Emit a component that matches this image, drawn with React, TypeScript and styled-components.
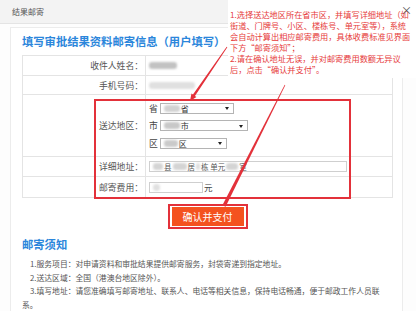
import React from "react";
import styled, { createGlobalStyle } from "styled-components";

const GlobalStyle = createGlobalStyle`
  html, body { margin: 0; padding: 0; background: #ffffff; }
  body { font-family: "Noto Sans CJK SC", "Noto Sans", sans-serif; color: #555; }
  * { box-sizing: border-box; }
`;

const Page = styled.div`
  position: relative;
  width: 416px;
  height: 311px;
  overflow: hidden;
  background: #fdfdfd;
`;

const Header = styled.div`
  height: 24px;
  border-bottom: 1px solid #e4e4e4;
  background: #f3f3f3;
  display: flex;
  align-items: center;
  padding: 0 0 0 12px;
  font-size: 8px;
  color: #555;
`;

const Close = styled.span`
  position: absolute;
  top: 4px;
  right: 4px;
  z-index: 4;
  font-size: 11px;
  line-height: 12px;
  color: #555;
`;

const Panel = styled.div`
  margin: 3px 13px 0 10px;
  min-height: 290px;
  background: #fff;
  border: 1px solid #ececec;
  border-bottom: none;
  padding: 5px 9px 0 11px;
`;

const Title = styled.h2`
  margin: 0 0 5px;
  font-size: 11.3px;
  line-height: 17px;
  font-weight: bold;
  color: #2b86db;
  white-space: nowrap;
`;

const Table = styled.div`
  border: 1px solid #e4e4e4;
  border-bottom: none;
`;

const Row = styled.div<{ $h: number }>`
  display: flex;
  height: ${(p) => p.$h}px;
  border-bottom: 1px solid #e4e4e4;
`;

const Label = styled.div`
  flex: none;
  width: 123px;
  border-right: 1px solid #e4e4e4;
  display: flex;
  align-items: center;
  justify-content: flex-end;
  padding-right: 2px;
  font-size: 8.8px;
  color: #555;
  white-space: nowrap;
`;

const Cell = styled.div`
  flex: 1;
  display: flex;
  align-items: center;
  padding-left: 3px;
  font-size: 8.5px;
  color: #444;
`;

const RegionList = styled.div`
  display: flex;
  flex-direction: column;
`;

const RegionLine = styled.div`
  display: flex;
  align-items: center;
  height: 17.5px;
  gap: 2px;
  font-size: 8.8px;
  color: #444;
`;

const SelectBox = styled.div<{ $w: number }>`
  position: relative;
  width: ${(p) => p.$w}px;
  height: 11px;
  border: 1px solid #b4b4b4;
  background: #fff;
  display: flex;
  align-items: center;
  gap: 1px;
  padding-left: 3px;
  font-size: 8px;
  line-height: 9px;
  color: #333;
  &::after {
    content: "";
    position: absolute;
    right: 4px;
    top: 3.5px;
    border-left: 2px solid transparent;
    border-right: 2px solid transparent;
    border-top: 3px solid #222;
  }
`;

const TextInput = styled.div<{ $w: number }>`
  width: ${(p) => p.$w}px;
  height: 11px;
  border: 1px solid #cfcfcf;
  background: #fff;
  display: flex;
  align-items: center;
  gap: 1px;
  padding-left: 3px;
  font-size: 7.5px;
  line-height: 9px;
  color: #555;
  white-space: nowrap;
`;

const Unit = styled.span`
  margin-left: 1px;
  font-size: 8.5px;
  color: #444;
`;

const Smudge = styled.span<{ $w: number; $tone?: string }>`
  display: inline-block;
  flex: none;
  width: ${(p) => p.$w}px;
  height: 7px;
  border-radius: 3px;
  background: ${(p) => p.$tone ?? "#cdcdcd"};
  filter: blur(1.1px);
`;

const ButtonRow = styled.div`
  display: flex;
  justify-content: center;
  margin-top: 6px;
`;

const ButtonFrame = styled.div`
  border: 2px solid #e3313a;
  padding: 1px 2px;
`;

const PayButton = styled.button`
  display: block;
  width: 72px;
  height: 19px;
  border: none;
  padding: 0;
  background: #f4521f;
  color: #fff;
  font-family: inherit;
  font-size: 10px;
  line-height: 19px;
`;

const NoticeTitle = styled.h3`
  margin: 6.5px 0 5.5px;
  font-size: 11.3px;
  line-height: 16px;
  font-weight: bold;
  color: #2b86db;
`;

const Notice = styled.div`
  padding-right: 2px;
`;

const NoticeItem = styled.p`
  margin: 0;
  text-indent: 8px;
  font-size: 7.8px;
  line-height: 13.5px;
  color: #555;
`;

const Annotation = styled.div`
  position: absolute;
  left: 228px;
  top: 0;
  width: 188px;
  height: 78px;
  z-index: 2;
  background: #fff;
  padding: 9px 0 0 2px;
  font-size: 8.2px;
  line-height: 11px;
  color: #e63b3b;
  white-space: nowrap;
`;

const Highlight = styled.div`
  position: absolute;
  left: 94px;
  top: 99px;
  width: 257px;
  height: 100px;
  border: 2px solid #e3313a;
  z-index: 2;
  pointer-events: none;
`;

const Arrows = styled.svg`
  position: absolute;
  left: 0;
  top: 0;
  z-index: 3;
  pointer-events: none;
`;

export default function App() {
  return (
    <>
      <GlobalStyle />
      <Page>
        <Header>结果邮寄</Header>
        <Panel>
          <Title>填写审批结果资料邮寄信息（用户填写）</Title>
          <Table>
            <Row $h={20}>
              <Label>收件人姓名：</Label>
              <Cell>
                <Smudge $w={28} $tone="#c2c2c2" />
              </Cell>
            </Row>
            <Row $h={19}>
              <Label>手机号码：</Label>
              <Cell>
                <Smudge $w={46} $tone="#e0e0e0" />
              </Cell>
            </Row>
            <Row $h={62}>
              <Label>送达地区：</Label>
              <Cell>
                <RegionList>
                  <RegionLine>
                    省
                    <SelectBox $w={74}>
                      <Smudge $w={16} $tone="#d2d2d2" />省
                    </SelectBox>
                  </RegionLine>
                  <RegionLine>
                    市
                    <SelectBox $w={88}>
                      <Smudge $w={16} $tone="#c8c8c8" />市
                    </SelectBox>
                  </RegionLine>
                  <RegionLine>
                    区
                    <SelectBox $w={67}>
                      <Smudge $w={14} $tone="#cacaca" />区
                    </SelectBox>
                  </RegionLine>
                </RegionList>
              </Cell>
            </Row>
            <Row $h={20}>
              <Label>详细地址：</Label>
              <Cell>
                <TextInput $w={198}>
                  <Smudge $w={10} $tone="#d4d4d4" />县
                  <Smudge $w={14} $tone="#d4d4d4" />居
                  <Smudge $w={4} $tone="#dddddd" />栋
                  单元
                  <Smudge $w={12} $tone="#d4d4d4" />室
                </TextInput>
              </Cell>
            </Row>
            <Row $h={21}>
              <Label>邮寄费用：</Label>
              <Cell>
                <TextInput $w={54}>
                  <Smudge $w={7} $tone="#e0e0e0" />
                </TextInput>
                <Unit>元</Unit>
              </Cell>
            </Row>
          </Table>
          <ButtonRow>
            <ButtonFrame>
              <PayButton>确认并支付</PayButton>
            </ButtonFrame>
          </ButtonRow>
          <NoticeTitle>邮寄须知</NoticeTitle>
          <Notice>
            <NoticeItem>1.服务项目：对申请资料和审批结果提供邮寄服务，封袋寄递到指定地址。</NoticeItem>
            <NoticeItem>2.送达区域：全国（港澳台地区除外）。</NoticeItem>
            <NoticeItem>
              3.填写地址：请您准确填写邮寄地址、联系人、电话等相关信息，保持电话畅通，便于邮政工作人员联
              <br />
              系。
            </NoticeItem>
          </Notice>
        </Panel>

        <Annotation>
          1.选择送达地区所在省市区，并填写详细地址（如
          <br />
          街道、门牌号、小区、楼栋号、单元室等），系统
          <br />
          会自动计算出相应邮寄费用，具体收费标准见界面
          <br />
          下方“邮寄须知”；
          <br />
          2.请在确认地址无误，并对邮寄费用数额无异议
          <br />
          后，点击“确认并支付”。
        </Annotation>
        <Close>×</Close>
        <Highlight />
        <Arrows width="416" height="311" viewBox="0 0 416 311">
          <polygon
            fill="#e3313a"
            points="226.67,46.77 227.33,47.23 194.94,95.91 196.42,96.93 190,101 191.48,93.54 192.96,94.55"
          />
          <polygon
            fill="#e3313a"
            points="284.73,84.865 285.27,85.135 225.61,206.81 222.39,205.19"
          />
        </Arrows>
      </Page>
    </>
  );
}
